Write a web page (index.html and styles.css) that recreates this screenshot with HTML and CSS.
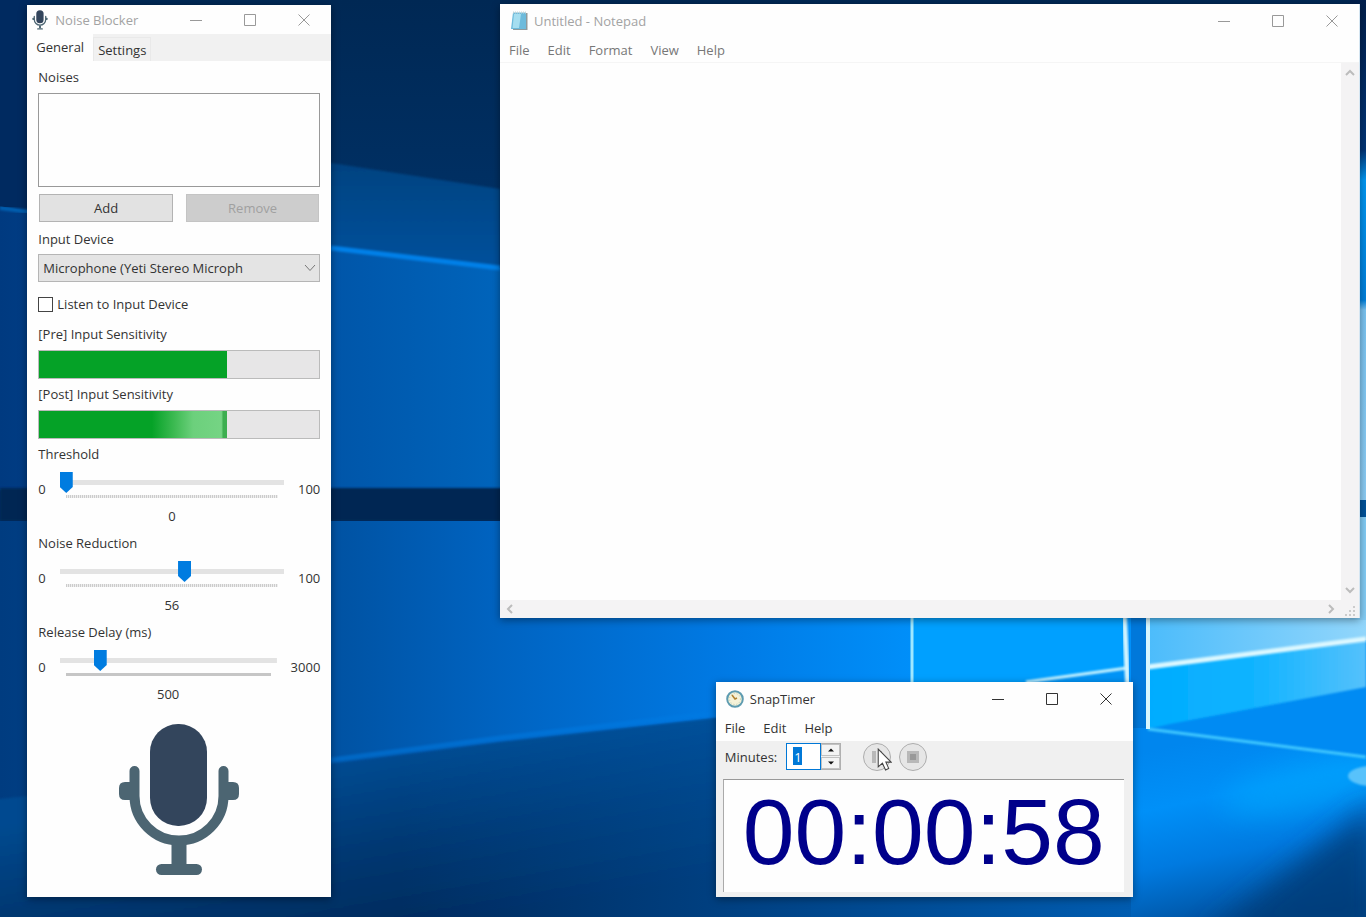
FILE: index.html
```
<!DOCTYPE html>
<html lang="en">
<head>
    <meta charset="UTF-8">
    <meta name="viewport" content="width=device-width, initial-scale=1.0">
    <title>Noise Blocker</title>
    <link rel="stylesheet" href="styles.css">
</head>
<body>

    <!-- Desktop wallpaper -->
    <svg class="wallpaper" viewBox="0 0 1366 917" preserveAspectRatio="none" aria-hidden="true">
        <defs>
            <linearGradient id="sky" gradientUnits="userSpaceOnUse" x1="0" y1="0" x2="0" y2="200">
                <stop offset="0" stop-color="#002854"/>
                <stop offset="1" stop-color="#003064"/>
            </linearGradient>
            <linearGradient id="beam" x1="0" y1="0" x2="0" y2="1">
                <stop offset="0" stop-color="#004280"/>
                <stop offset="0.3" stop-color="#00509a"/>
                <stop offset="1" stop-color="#0059a8"/>
            </linearGradient>
            <linearGradient id="upper" x1="0" y1="0" x2="1" y2="0">
                <stop offset="0" stop-color="#003a80"/>
                <stop offset="0.65" stop-color="#0055a8"/>
                <stop offset="1" stop-color="#0064bb"/>
            </linearGradient>
            <linearGradient id="lower" gradientUnits="userSpaceOnUse" x1="0" y1="0" x2="920" y2="0">
                <stop offset="0" stop-color="#003c80"/>
                <stop offset="0.36" stop-color="#0052a2"/>
                <stop offset="0.55" stop-color="#0064c2"/>
                <stop offset="0.8" stop-color="#007be6"/>
                <stop offset="1" stop-color="#0090fa"/>
            </linearGradient>
            <linearGradient id="floor" gradientUnits="userSpaceOnUse" x1="460" y1="745" x2="490" y2="917">
                <stop offset="0" stop-color="#004a90"/>
                <stop offset="0.5" stop-color="#003872"/>
                <stop offset="1" stop-color="#002a5c"/>
            </linearGradient>
            <linearGradient id="floorright" gradientUnits="userSpaceOnUse" x1="400" y1="0" x2="1131" y2="0">
                <stop offset="0" stop-color="#005cb0" stop-opacity="0"/>
                <stop offset="0.5" stop-color="#005cb0" stop-opacity="0.5"/>
                <stop offset="1" stop-color="#005cb0"/>
            </linearGradient>
            <linearGradient id="glow" gradientUnits="userSpaceOnUse" x1="1200" y1="740" x2="1240" y2="930">
                <stop offset="0" stop-color="#0086ee"/>
                <stop offset="0.3" stop-color="#0090f8"/>
                <stop offset="0.6" stop-color="#007ae0"/>
                <stop offset="0.85" stop-color="#005cb0"/>
                <stop offset="1" stop-color="#004a92"/>
            </linearGradient>
            <linearGradient id="glass" x1="0" y1="0" x2="1" y2="0">
                <stop offset="0" stop-color="#4cbcfb"/>
                <stop offset="1" stop-color="#92d6fb"/>
            </linearGradient>
            <linearGradient id="glasslow" x1="0" y1="0" x2="1" y2="0">
                <stop offset="0" stop-color="#00acff"/>
                <stop offset="0.5" stop-color="#12b4ff"/>
                <stop offset="1" stop-color="#55c1fc"/>
            </linearGradient>
            <linearGradient id="edge" x1="0" y1="0" x2="0" y2="1">
                <stop offset="0" stop-color="#001f4c"/>
                <stop offset="0.3" stop-color="#003476"/>
                <stop offset="0.36" stop-color="#0098f4"/>
                <stop offset="0.6" stop-color="#0080dc"/>
                <stop offset="0.62" stop-color="#7bc4f2"/>
                <stop offset="1" stop-color="#8ccdf5"/>
            </linearGradient>
            <filter id="soft" x="-20%" y="-20%" width="140%" height="140%"><feGaussianBlur stdDeviation="1"/></filter>
            <filter id="haze" x="-50%" y="-50%" width="200%" height="200%"><feGaussianBlur stdDeviation="14"/></filter>
        </defs>
        <rect width="1366" height="917" fill="url(#sky)"/>
        <path d="M0 160L331 163L500 189V490H0Z" fill="url(#beam)" filter="url(#soft)"/>
        <path d="M0 0H30V212L0 206Z" fill="#002a60"/>
        <path d="M0 207L331 248L500 268V489H0Z" fill="url(#upper)"/>
        <path d="M331 248L500 268" stroke="#0080e8" stroke-width="5" filter="url(#soft)"/>
        <path d="M0 208L30 212" stroke="#005eb0" stroke-width="4" filter="url(#soft)"/>
        <rect y="488" width="520" height="33" fill="#002752" filter="url(#soft)"/>
        <path d="M0 521H500V610H1366V917H0Z" fill="url(#lower)"/>
        <path d="M-9 800L331 764L500 742L716 718L1150 717V930H-9Z" fill="url(#floor)" filter="url(#soft)"/>
        <path d="M331 764L500 742L716 718H1150V917H331Z" fill="url(#floorright)"/>
        <path d="M331 760L500 738L716 713" stroke="#007be3" stroke-width="5" fill="none" opacity="0.5" filter="url(#soft)"/>
        <path d="M912 610H1127V700H912Z" fill="#00a0ff"/>
        <path d="M1026 682L1127 668V700H1026Z" fill="#0094f7"/>
        <path d="M1026 682L1127 668" stroke="#c5f2ff" stroke-width="3" filter="url(#soft)"/>
        <path d="M912 610V690" stroke="#9fe8ff" stroke-width="3"/>
        <path d="M1124 610L1128 690" stroke="#d4f5ff" stroke-width="5" filter="url(#soft)"/>
        <path d="M1131 610H1148V740H1131Z" fill="#0078da"/>
        <path d="M1131 728H1366V917H1131Z" fill="url(#glow)"/>
        <ellipse cx="1310" cy="786" rx="90" ry="24" fill="#00a9ff" opacity="0.6" filter="url(#haze)" transform="rotate(-12 1310 786)"/>
        <path d="M1200 940L1376 802V940Z" fill="#003a76" opacity="0.8" filter="url(#haze)"/>
        <ellipse cx="1372" cy="776" rx="24" ry="10" fill="#58c2fb" filter="url(#soft)"/>
        <path d="M1148 610H1366V758L1148 729Z" fill="#008bf3"/>
        <path d="M1148 610H1366V640L1148 667Z" fill="url(#glass)"/>
        <path d="M1148 667L1366 640V687L1170 724L1148 729Z" fill="url(#glasslow)" filter="url(#soft)"/>
        <path d="M1148 667L1366 639" stroke="#dcf8ff" stroke-width="5" filter="url(#soft)"/>
        <path d="M1148 729L1366 757" stroke="#41c8ff" stroke-width="3" filter="url(#soft)"/>
        <path d="M1148 610V729" stroke="#d8f7ff" stroke-width="4"/>
        <rect x="1350" width="16" height="500" fill="url(#edge)"/>
        <rect x="1350" y="500" width="16" height="17" fill="#00529a"/>
        <rect x="1350" y="517" width="16" height="103" fill="#83cdf6"/>
    </svg>

    <!-- Noise Blocker -->
    <main class="window blocker">
        <header class="titlebar inactive">
            <svg class="app-icon" viewBox="116 722 126 156" aria-hidden="true"><use href="#mic"/></svg>
            <h1 class="title">Noise Blocker</h1>
            <div class="controls">
                <button type="button" aria-label="Minimize"><svg viewBox="0 0 12 12"><path d="M0 6.5H12"/></svg></button>
                <button type="button" aria-label="Maximize"><svg viewBox="0 0 12 12"><path d="M.5.5H11.5V11.5H.5Z"/></svg></button>
                <button type="button" aria-label="Close"><svg viewBox="0 0 12 12"><path d="M.5.5L11.5 11.5M11.5.5L.5 11.5"/></svg></button>
            </div>
        </header>

        <div class="tabs" role="tablist">
            <button type="button" class="tab active" role="tab" aria-selected="true">General</button>
            <button type="button" class="tab" role="tab" aria-selected="false">Settings</button>
        </div>

        <form class="panel">
            <label for="noises">Noises</label>
            <select id="noises" class="noises" size="5"></select>

            <div class="buttons">
                <button type="button" class="push">Add</button>
                <button type="button" class="push" disabled>Remove</button>
            </div>

            <label for="device">Input Device</label>
            <div class="combo">
                <select id="device">
                    <option>Microphone (Yeti Stereo Microph</option>
                </select>
                <svg viewBox="0 0 12 8" aria-hidden="true"><path d="M1 1L6 6.5L11 1"/></svg>
            </div>

            <div class="check">
                <input type="checkbox" id="listen">
                <label for="listen">Listen to Input Device</label>
            </div>

            <span id="pre">[Pre] Input Sensitivity</span>
            <div class="meter" role="meter" aria-labelledby="pre" aria-valuenow="67">
                <div class="level" style="width: 67%"></div>
            </div>

            <span id="post">[Post] Input Sensitivity</span>
            <div class="meter" role="meter" aria-labelledby="post" aria-valuenow="67">
                <div class="level shine" style="width: 67%"></div>
            </div>

            <label for="threshold">Threshold</label>
            <div class="slider">
                <span class="bound">0</span>
                <div class="scale">
                    <input type="range" id="threshold" min="0" max="100" value="0">
                    <div class="ticks"></div>
                    <output for="threshold">0</output>
                </div>
                <span class="bound">100</span>
            </div>

            <label for="reduction">Noise Reduction</label>
            <div class="slider">
                <span class="bound">0</span>
                <div class="scale">
                    <input type="range" id="reduction" min="0" max="100" value="56">
                    <div class="ticks"></div>
                    <output for="reduction">56</output>
                </div>
                <span class="bound">100</span>
            </div>

            <label for="delay">Release Delay (ms)</label>
            <div class="slider">
                <span class="bound">0</span>
                <div class="scale">
                    <input type="range" id="delay" min="0" max="3000" value="500">
                    <div class="ticks solid"></div>
                    <output for="delay">500</output>
                </div>
                <span class="bound">3000</span>
            </div>

            <svg class="mic" viewBox="119 724 120 152" aria-hidden="true">
                <g id="mic">
                    <rect x="150" y="724" width="57" height="102" rx="28" fill="#33455c"/>
                    <path d="M134.500 771V796A44.500 44.500 0 0 0 223.500 796V771" fill="none" stroke="#4c6572" stroke-width="10" stroke-linecap="round"/>
                    <path d="M134 782H125Q119 782 119 788V794Q119 800 125 800H134ZM224 782H233Q239 782 239 788V794Q239 800 233 800H224Z" fill="#4c6572"/>
                    <path d="M171.500 842H186.500V865H171.500Z" fill="#4c6572"/>
                    <rect x="156" y="864" width="46" height="11" rx="5.500" fill="#4c6572"/>
                </g>
            </svg>
        </form>
    </main>

    <!-- Notepad -->
    <section class="window notepad" aria-label="Notepad">
        <header class="titlebar inactive">
            <svg class="app-icon" viewBox="0 0 18 20" aria-hidden="true">
                <path d="M4 2H17.500V19H3Z" fill="#8f9a9c"/>
                <path d="M3 1.500H16V18H1Z" fill="#6dbbdc"/>
                <path d="M4 3H11L9 17H2.500Z" fill="#a5def0"/>
                <path d="M3 1.500H16" stroke="#c6d4d6" stroke-width="2" stroke-dasharray="1 1"/>
            </svg>
            <h2 class="title">Untitled - Notepad</h2>
            <div class="controls">
                <button type="button" aria-label="Minimize"><svg viewBox="0 0 12 12"><path d="M0 6.5H12"/></svg></button>
                <button type="button" aria-label="Maximize"><svg viewBox="0 0 12 12"><path d="M.5.5H11.5V11.5H.5Z"/></svg></button>
                <button type="button" aria-label="Close"><svg viewBox="0 0 12 12"><path d="M.5.5L11.5 11.5M11.5.5L.5 11.5"/></svg></button>
            </div>
        </header>
        <nav class="menu">
            <button type="button">File</button>
            <button type="button">Edit</button>
            <button type="button">Format</button>
            <button type="button">View</button>
            <button type="button">Help</button>
        </nav>
        <div class="editor">
            <textarea aria-label="Document text"></textarea>
            <div class="scrollbar vertical">
                <svg viewBox="0 0 10 10"><path d="M1 7L5 3L9 7"/></svg>
                <svg viewBox="0 0 10 10"><path d="M1 3L5 7L9 3"/></svg>
            </div>
            <div class="scrollbar">
                <svg viewBox="0 0 10 10"><path d="M7 1L3 5L7 9"/></svg>
                <svg viewBox="0 0 10 10"><path d="M3 1L7 5L3 9"/></svg>
            </div>
            <svg class="grip" viewBox="0 0 18 18" aria-hidden="true">
                <path d="M12 6H14V8H12ZM12 10H14V12H12ZM8 10H10V12H8ZM12 14H14V16H12ZM8 14H10V16H8ZM4 14H6V16H4Z"/>
            </svg>
        </div>
    </section>

    <!-- SnapTimer -->
    <section class="window timer" aria-label="SnapTimer">
        <header class="titlebar">
            <svg class="app-icon" viewBox="0 0 18 18" aria-hidden="true">
                <circle cx="9" cy="9" r="7.800" fill="#f6f2d8" stroke="#5d9bb0" stroke-width="2"/>
                <circle cx="9" cy="9" r="5.500" fill="none" stroke="#b5cdb9" stroke-dasharray="1 2"/>
                <path d="M6 5L9 9L11 8" fill="none" stroke="#b0822f" stroke-width="1.500"/>
            </svg>
            <h2 class="title">SnapTimer</h2>
            <div class="controls">
                <button type="button" aria-label="Minimize"><svg viewBox="0 0 12 12"><path d="M0 6.5H12"/></svg></button>
                <button type="button" aria-label="Maximize"><svg viewBox="0 0 12 12"><path d="M.5.5H11.5V11.5H.5Z"/></svg></button>
                <button type="button" aria-label="Close"><svg viewBox="0 0 12 12"><path d="M.5.5L11.5 11.5M11.5.5L.5 11.5"/></svg></button>
            </div>
        </header>
        <nav class="menu">
            <button type="button">File</button>
            <button type="button">Edit</button>
            <button type="button">Help</button>
        </nav>
        <div class="toolbar">
            <label for="minutes">Minutes:</label>
            <div class="spinner">
                <input type="text" id="minutes" value="1">
                <div class="steps">
                    <button type="button" aria-label="More"><svg viewBox="0 0 8 4"><path d="M0 4L4 0L8 4Z"/></svg></button>
                    <button type="button" aria-label="Less"><svg viewBox="0 0 8 4"><path d="M0 0L4 4L8 0Z"/></svg></button>
                </div>
            </div>
            <button type="button" class="round" aria-label="Pause">
                <svg viewBox="0 0 12 12"><path d="M1 0H5V12H1ZM7 0H11V12H7Z"/></svg>
                <svg class="pointer" viewBox="0 0 14 22"><path d="M1 1V18L5 14.500L8 21L11 19.500L8.300 13.500H13.300Z"/></svg>
            </button>
            <button type="button" class="round" aria-label="Stop">
                <svg viewBox="0 0 12 12"><path d="M0 0H12V12H0Z"/><path class="core" d="M3 3H9V9H3Z"/></svg>
            </button>
        </div>
        <div class="display">00:00:58</div>
    </section>

</body>
</html>
```
FILE: styles.css
```
* {
    box-sizing: border-box;
}
body {
    margin: 0;
    height: 100vh;
    overflow: hidden;
    position: relative;
    background-color: #003368;
    font-family: "Open Sans", "Noto Sans", sans-serif;
    font-size: 13px;
    line-height: 20px;
    color: #333;
}
button, input, select, textarea, output {
    font: inherit;
    color: inherit;
    margin: 0;
}
button {
    padding: 0;
    border: none;
    background: none;
}
.wallpaper {
    position: absolute;
    width: 100%;
    height: 100%;
}

/* windows */
.window {
    position: absolute;
    display: flex;
    flex-direction: column;
    background-color: #fefefe;
    box-shadow: 0 2px 8px rgba(0, 0, 0, 0.4);
}
.blocker {
    left: 2%;
    top: 5px;
    width: 304px;
}
.notepad {
    left: 36.6%;
    top: 4px;
    right: 6px;
    height: 67vh;
    border-right: 1px solid #d5e6f2;
}
.timer {
    left: 52.4%;
    top: 74.4vh;
    width: 417px;
    background-color: #f0f0f0;
}
.titlebar {
    display: flex;
    align-items: center;
    gap: 6px;
    height: 33px;
    padding-left: 10px;
    background-color: #fefefe;
}
.title {
    flex: 1;
    margin: 0;
    font-size: 13px;
    font-weight: normal;
}
.inactive .title {
    color: #a3a3a3;
}
.app-icon {
    width: 18px;
    height: 20px;
}
.controls {
    display: flex;
}
.controls button {
    display: flex;
    align-items: center;
    justify-content: center;
    width: 54px;
    height: 28px;
}
.controls svg {
    width: 12px;
    height: 12px;
    fill: none;
    stroke: #333;
}
.inactive .controls svg {
    stroke: #999;
}
.menu {
    display: flex;
    gap: 18px;
    height: 26px;
    padding: 0 9px;
    background-color: #fefefe;
}

/* noise blocker */
.blocker .titlebar {
    height: 29px;
    padding-left: 4px;
}
.tabs {
    display: flex;
    align-items: flex-end;
    height: 27px;
    background-color: #f1f1f1;
}
.tab {
    height: 24px;
    padding: 0 4px;
    border: 1px solid #e9e9e9;
    border-bottom: none;
}
.tab.active {
    height: 27px;
    padding: 0 9px 2px;
    border: none;
    background-color: #fefefe;
}
.panel {
    display: flex;
    flex-direction: column;
    padding: 6px 11px 21px;
}
.noises {
    height: 94px;
    margin: 6px 0 7px;
    border: 1px solid #999;
    border-radius: 0;
    background-color: #fefefe;
}
.buttons {
    display: flex;
    gap: 13px;
    padding: 0 1px;
    margin-bottom: 7px;
}
.push {
    flex: 1;
    height: 28px;
    border: 1px solid #b3b3b3;
    background-color: #e2e2e2;
}
.push:disabled {
    border-color: #c4c4c4;
    background-color: #cdcdcd;
    color: #a0a0a0;
}
.combo {
    display: grid;
    align-items: center;
    margin: 5px 0 12px;
}
.combo select, .combo svg {
    grid-area: 1 / 1;
}
.combo select {
    width: 100%;
    height: 28px;
    padding: 0 4px;
    border: 1px solid #b5b5b5;
    border-radius: 0;
    background-color: #e4e4e4;
    appearance: none;
}
.combo svg {
    justify-self: end;
    width: 12px;
    height: 8px;
    margin-right: 4px;
    fill: none;
    stroke: #777;
    pointer-events: none;
}
.check {
    display: flex;
    align-items: center;
    gap: 4px;
    margin-bottom: 10px;
}
.check input {
    width: 15px;
    height: 15px;
    border: 1px solid #444;
    background-color: #fff;
    appearance: none;
}
.meter {
    height: 29px;
    margin: 6px 0 5px;
    border: 1px solid #bbb;
    background-color: #e7e6e7;
}
.level {
    height: 100%;
    background-color: #05a227;
}
.shine {
    background: linear-gradient(to right, #05a227 60%, #3dba52 72%, #6cd07c 82%, #75d484 97%, #3dae50 98%);
}
.slider {
    display: flex;
    gap: 14px;
    margin-bottom: 7px;
}
.bound {
    margin-top: 15px;
}
.scale {
    flex: 1;
    min-width: 0;
    display: flex;
    flex-direction: column;
}
.scale input {
    width: 100%;
    height: 21px;
    margin-top: 8px;
    background: linear-gradient(#e3e3e3, #e3e3e3) center / 100% 5px no-repeat;
    appearance: none;
}
.scale input::-webkit-slider-thumb {
    width: 13px;
    height: 21px;
    background-color: #007ce0;
    clip-path: polygon(0 0, 100% 0, 100% 72%, 50% 100%, 0 72%);
    appearance: none;
}
.ticks {
    height: 3px;
    margin: 2px 6px 8px;
    background: repeating-linear-gradient(to right, #ccc 0 1px, #eee 1px 2px);
}
.ticks.solid {
    background: #c6c6c6;
}
.scale output {
    text-align: center;
}
.mic {
    align-self: center;
    width: 120px;
    height: 152px;
    margin-top: 13px;
}

/* notepad */
.notepad .menu {
    border-bottom: 1px solid #f5f5f5;
    color: #777;
}
.editor {
    flex: 1;
    display: grid;
    grid-template-columns: 1fr 18px;
    grid-template-rows: 1fr 18px;
}
.editor textarea {
    border: none;
    background-color: #fefefe;
    resize: none;
}
.scrollbar {
    display: flex;
    align-items: center;
    justify-content: space-between;
    padding: 0 5px;
    background-color: #f4f3f4;
}
.scrollbar.vertical {
    flex-direction: column;
    padding: 5px 0;
}
.scrollbar svg {
    width: 10px;
    height: 10px;
    fill: none;
    stroke: #bcbcbc;
    stroke-width: 2;
}
.grip {
    background-color: #f4f3f4;
    fill: #ccc;
}

/* timer */
.toolbar {
    display: flex;
    align-items: center;
    height: 31px;
    padding: 0 9px;
    margin-bottom: 7px;
}
.spinner {
    display: flex;
    width: 55px;
    height: 27px;
    margin: 0 22px 0 9px;
    border: 1px solid #b0b0b0;
}
.spinner input {
    flex: 1;
    min-width: 0;
    margin: -1px 0 -1px -1px;
    padding: 0 7px;
    border: 1px solid #0078d7;
    background: linear-gradient(#0078d7, #0078d7) 6px 3px / 9px 18px no-repeat #fff;
    color: #fff;
    outline: none;
}
.steps {
    display: flex;
    flex-direction: column;
    gap: 1px;
    width: 19px;
}
.steps button {
    flex: 1;
    display: flex;
    align-items: center;
    justify-content: center;
    border: 1px solid #c2c2c2;
    background-color: #f4f4f4;
}
.steps svg {
    width: 6px;
    height: 4px;
    fill: #111;
}
.round {
    position: relative;
    display: flex;
    align-items: center;
    justify-content: center;
    width: 28px;
    height: 28px;
    margin-right: 8px;
    border: 1px solid #adadad;
    border-radius: 50%;
    background-color: #e6e6e6;
}
.round svg {
    width: 12px;
    height: 12px;
    fill: #b8b8b8;
}
.round .core {
    fill: #999;
}
.round .pointer {
    position: absolute;
    left: 13px;
    top: 4px;
    width: 15px;
    height: 23px;
    fill: #fff;
    stroke: #444;
}
.display {
    height: 113px;
    margin: 0 9px 5px 7px;
    border-top: 1px solid #999;
    border-left: 1px solid #aaa;
    background-color: #fefefe;
    font-family: "Liberation Sans", Arial, sans-serif;
    font-size: 93px;
    line-height: 104px;
    text-align: center;
    color: #00008b;
}
```
